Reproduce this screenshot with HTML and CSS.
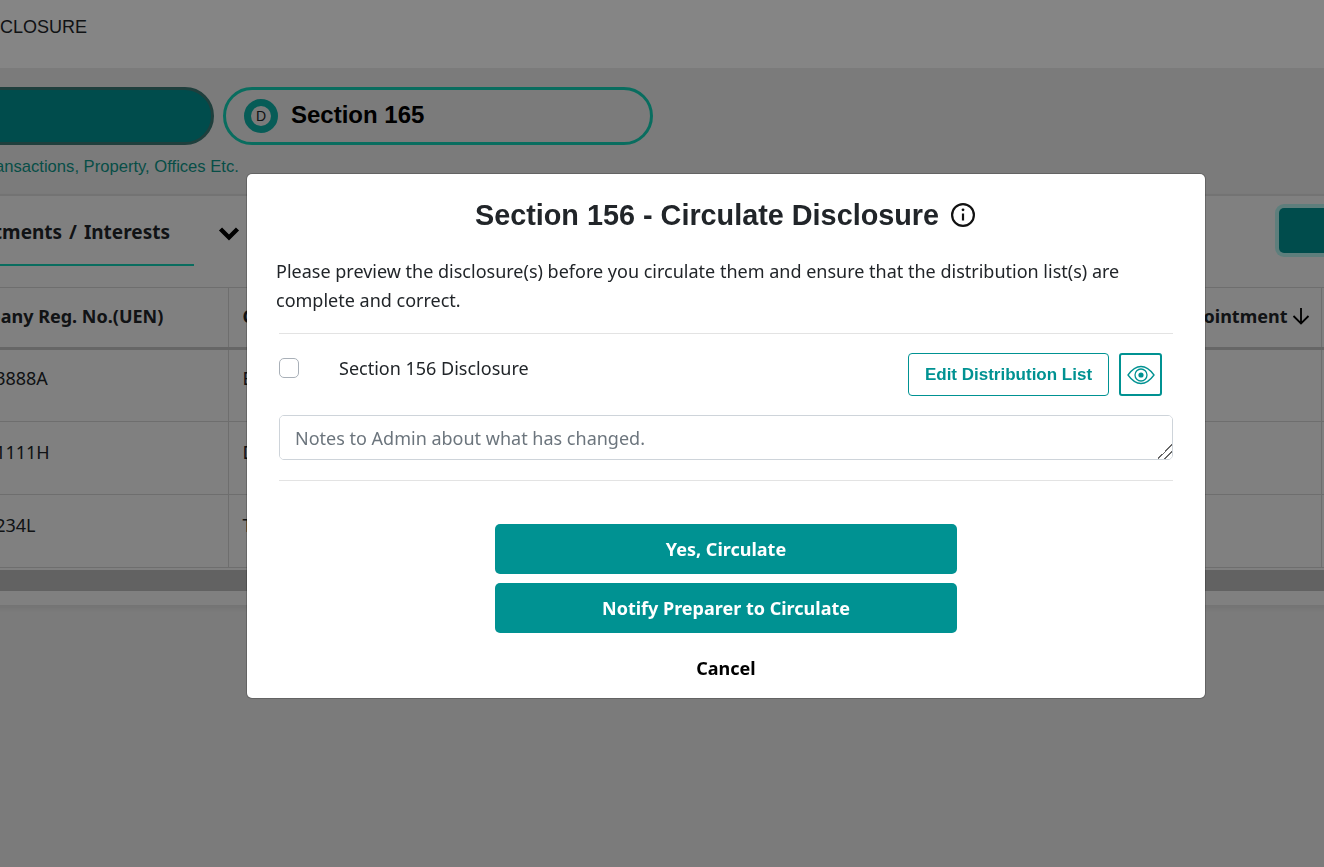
FILE: index.html
```html
<!DOCTYPE html>
<html lang="en">
<head>
  <meta charset="UTF-8">
  <title>Section 156 - Circulate Disclosure</title>
  <meta name="viewport" content="width=device-width, initial-scale=1.0">
  <link rel="stylesheet" href="styles.css">
</head>
<body>
  <div class="page">
    <div class="topbar">DISCLOSURE</div>

    <div class="steps">
      <div class="step step-active"></div>
      <div class="step">
        <span class="step-badge">D</span>
        <span class="step-name">Section 165</span>
      </div>
    </div>
    <div class="step-note">Transactions, Property, Offices Etc.</div>

    <div class="card">
      <div class="tabs">
        <div class="tab">Appointments / Interests</div>
        <svg class="tab-arrow" width="22" height="16" viewBox="0 0 22 16"><path d="M2.500 3l8.500 8.500L19.500 3" fill="none" stroke="#000" stroke-width="4.400"/></svg>
        <div class="tab-action"></div>
      </div>

      <table class="grid">
        <tr>
          <th class="col-uen">Company Reg. No.(UEN)</th>
          <th class="col-name">Company Name</th>
          <th class="col-date">
            <span class="date-head">Date of Appointment
              <svg width="18" height="18" viewBox="0 0 18 18" fill="none" stroke="#000" stroke-width="1.800"><path d="M9 1v15.500M1.500 9L9 16.500 16.500 9"/></svg>
            </span>
          </th>
          <th></th>
        </tr>
        <tr class="row-first">
          <td>20183888A</td>
          <td>Bright Holdings</td>
          <td></td>
          <td></td>
        </tr>
        <tr>
          <td>20011111H</td>
          <td>Delta Pte Ltd</td>
          <td></td>
          <td></td>
        </tr>
        <tr>
          <td>2001234L</td>
          <td>Tan Ventures</td>
          <td></td>
          <td></td>
        </tr>
      </table>
      <div class="scrollbar"></div>
      <div class="card-foot"></div>
    </div>
  </div>

  <div class="backdrop">
    <div class="modal">
      <h2 class="modal-title">
        Section 156 - Circulate Disclosure
        <svg class="info-icon" width="24" height="24" viewBox="0 0 24 24" fill="none" stroke="#111" stroke-width="2.200">
          <circle cx="12" cy="12" r="10.900"/>
          <path d="M12 10.500v7"/>
          <circle cx="12" cy="6.800" r="1.400" fill="#111" stroke="none"/>
        </svg>
      </h2>
      <p class="modal-text">Please preview the disclosure(s) before you circulate them and ensure that the distribution list(s) are complete and correct.</p>

      <div class="disclosure">
        <div class="disclosure-row">
          <input type="checkbox" class="check">
          <span class="disclosure-name">Section 156 Disclosure</span>
          <button class="btn-outline">Edit Distribution List</button>
          <button class="btn-eye">
            <svg width="28" height="20" viewBox="0 0 28 20" fill="none" stroke="#009292" stroke-width="1.300">
              <path d="M1 10C5 4.500 9.200 1.500 14 1.500S23 4.500 27 10c-4 5.500-8.200 8.500-13 8.500S5 15.500 1 10z"/>
              <circle cx="14" cy="10" r="6"/>
              <circle cx="14" cy="10" r="2.600" fill="#009292" stroke="none"/>
            </svg>
          </button>
        </div>
        <textarea class="notes" placeholder="Notes to Admin about what has changed."></textarea>
      </div>

      <div class="actions">
        <button class="btn-main">Yes, Circulate</button>
        <button class="btn-main">Notify Preparer to Circulate</button>
        <button class="btn-cancel">Cancel</button>
      </div>
    </div>
  </div>
</body>
</html>
```

FILE: styles.css
```css
html, body {
  margin: 0;
  height: 100%;
  overflow: hidden;
}

body {
  background: #ececec;
  font-family: "Noto Sans", Arial, sans-serif;
  color: #212529;
}

/* page is scrolled sideways behind the dialog */
.page {
  width: 1600px;
  margin-left: -65px;
}

.topbar {
  height: 68px;
  box-sizing: border-box;
  padding: 15px 0 0 35px;
  background: #fff;
  font-family: "Liberation Sans", Arial, sans-serif;
  font-size: 18px;
  line-height: 24px;
}

.steps {
  display: flex;
  gap: 9px;
  padding-top: 19px;
}

.step {
  width: 430px;
  height: 58px;
  box-sizing: border-box;
  border: 3px solid #13d2b7;
  border-radius: 29px;
  display: flex;
  align-items: center;
  padding-left: 18px;
}

.step-active {
  width: 279px;
  background: #009292;
  border-color: #3c7975;
}

.step-badge {
  width: 34px;
  height: 34px;
  box-sizing: border-box;
  border: 7px solid #0fb0a8;
  border-radius: 50%;
  display: flex;
  align-items: center;
  justify-content: center;
  font-family: "Liberation Sans", Arial, sans-serif;
  font-size: 14px;
  margin-right: 13px;
}

.step-name {
  padding-bottom: 2px;
  font-family: "Liberation Sans", Arial, sans-serif;
  font-size: 24px;
  font-weight: bold;
  color: #000;
}

.step-note {
  margin-top: 12px;
  padding-left: 45px;
  height: 21px;
  line-height: 20px;
  font-family: "Liberation Sans", Arial, sans-serif;
  font-size: 16.6px;
  color: #0f9689;
}

.card {
  margin-top: 16px;
  background: #f6f6f6;
  border-top: 2px solid #dcdcdc;
  box-shadow: 0 3px 6px rgba(0, 0, 0, 0.08);
}

.tabs {
  height: 91px;
  display: flex;
  align-items: flex-start;
}

.tab {
  width: 259px;
  height: 70px;
  box-sizing: border-box;
  padding: 23px 24px 0 0;
  display: flex;
  justify-content: flex-end;
  border-bottom: 2px solid #13d2b7;
  font-size: 19px;
  font-weight: 700;
  word-spacing: 2px;
  white-space: nowrap;
}

.tab-arrow {
  margin: 30px 0 0 24px;
}

.tab-action {
  width: 140px;
  height: 45px;
  margin: 12px 0 0 1039px;
  background: #009292;
  border-radius: 5px;
  box-shadow: 0 0 0 4px #b4f2ee;
}

.grid {
  border-collapse: collapse;
  table-layout: fixed;
  width: 1472px;
}

.grid th, .grid td {
  border: 1px solid #d3d3d3;
  border-left: 0;
  text-align: left;
  white-space: nowrap;
  overflow: hidden;
  padding: 0 0 0 14px;
  box-sizing: border-box;
}

.grid th {
  height: 61px;
  padding-bottom: 3px;
  border-bottom: 3px solid #c4c4c4;
  font-size: 18px;
  font-weight: 700;
}

.grid td {
  height: 73px;
  font-size: 18px;
  vertical-align: top;
  padding-top: 18px;
}

.grid .row-first td {
  padding-top: 16px;
}

.grid td:first-child {
  padding-left: 19px;
}

.col-uen { width: 293px; }
.col-name { width: 772px; }

.grid .col-date {
  width: 321px;
  padding-right: 11px;
}

.date-head {
  display: flex;
  justify-content: flex-end;
  align-items: center;
  gap: 4px;
}

.scrollbar {
  height: 21px;
  margin-top: 2px;
  background: #bcbcbc;
}

.card-foot {
  height: 14px;
}

.backdrop {
  position: fixed;
  inset: 0;
  background: rgba(0, 0, 0, 0.48);
}

.modal {
  position: absolute;
  left: 247px;
  top: 174px;
  width: 958px;
  height: 524px;
  box-sizing: border-box;
  padding: 0 32px 0 29px;
  background: #fff;
  border-radius: 5px;
  box-shadow: 0 0 0 1px rgba(0, 0, 0, 0.2);
}

.modal-title {
  margin: 22px 0 0 1px;
  display: flex;
  justify-content: center;
  align-items: center;
  gap: 12px;
  font-family: "Liberation Sans", Arial, sans-serif;
  font-size: 28.8px;
  line-height: 38px;
  font-weight: bold;
}

.modal-text {
  margin: 23px 0 0;
  font-size: 18px;
  line-height: 29px;
}

.disclosure {
  margin: 18px 0 0 3px;
  padding: 19px 0 20px;
  border-top: 1px solid #e3e3e3;
  border-bottom: 1px solid #e3e3e3;
}

.disclosure-row {
  display: flex;
  align-items: flex-start;
  padding-bottom: 19px;
}

.check {
  appearance: none;
  width: 20px;
  height: 20px;
  margin: 5px 40px 0 0;
  border: 1px solid #a9b0b8;
  border-radius: 5px;
  background: #fff;
}

.disclosure-name {
  flex: 1;
  font-size: 18px;
  line-height: 30px;
}

.btn-outline {
  width: 201px;
  height: 43px;
  border: 1px solid #009292;
  border-radius: 4px;
  background: #fff;
  color: #009292;
  font-family: "Liberation Sans", Arial, sans-serif;
  font-size: 17px;
  font-weight: bold;
}

.btn-eye {
  width: 43px;
  height: 43px;
  margin: 0 11px 0 10px;
  padding: 0;
  display: flex;
  align-items: center;
  justify-content: center;
  border: 2px solid #009292;
  border-radius: 3px;
  background: #fff;
}

.notes {
  display: block;
  width: 100%;
  height: 45px;
  box-sizing: border-box;
  padding: 9px 15px;
  border: 1px solid #ced4da;
  border-radius: 5px;
  font-family: "Noto Sans", Arial, sans-serif;
  font-size: 18px;
  line-height: 26px;
}

.notes::placeholder {
  color: #6c757d;
  opacity: 1;
}

.notes::-webkit-resizer {
  background: linear-gradient(135deg, transparent 50%, #666 50% 55%, transparent 55% 72%, #666 72% 77%, transparent 77%);
}

.actions {
  margin: 43px 0 0 3px;
  display: flex;
  flex-direction: column;
  align-items: center;
  gap: 9px;
}

.btn-main {
  width: 462px;
  height: 50px;
  border: 0;
  border-radius: 5px;
  background: #009292;
  color: #fff;
  font-family: "Noto Sans", Arial, sans-serif;
  font-size: 18px;
  font-weight: 700;
}

.btn-cancel {
  margin-top: 14px;
  border: 0;
  padding: 0;
  background: none;
  color: #000;
  font-family: "Noto Sans", Arial, sans-serif;
  font-size: 18px;
  font-weight: 700;
}
```
